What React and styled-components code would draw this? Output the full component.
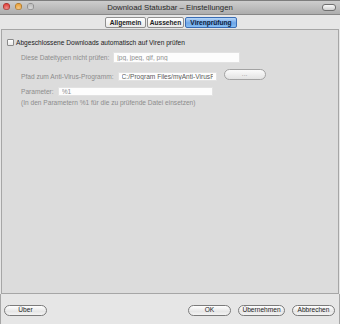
import styled, { createGlobalStyle } from 'styled-components';

const GlobalStyle = createGlobalStyle`
  html, body {
    margin: 0;
    padding: 0;
    background: #e6e6e6;
  }
  body {
    font-family: "Liberation Sans", Arial, sans-serif;
    font-size: 6.6px;
    color: #222;
  }
`;

const App = () => {
  return (
    <>
      <GlobalStyle />
      <Window>
        <TitleBar>
          <Lights>
            <Light color="#e0443e" />
            <Light color="#e9a23b" />
            <Light color="#bcbcbc" />
          </Lights>
          <Title>Download Statusbar – Einstellungen</Title>
          <ToolbarPill />
        </TitleBar>

        <TabRow>
          <Tab width={41}>Allgemein</Tab>
          <Tab width={37}>Aussehen</Tab>
          <Tab width={52} active>Virenprüfung</Tab>
        </TabRow>

        <Panel>
          <CheckRow>
            <Checkbox />
            <span>Abgeschlossene Downloads automatisch auf Viren prüfen</span>
          </CheckRow>

          <FieldRow top={6}>
            <Label>Diese Dateitypen nicht prüfen:</Label>
            <Field width={127} height={11} value="jpg, jpeg, gif, png" readOnly />
          </FieldRow>

          <FieldRow top={9}>
            <Label>Pfad zum Anti-Virus-Programm:</Label>
            <Field width={99} height={9} dark value="C:/Program Files/myAnti-VirusP" readOnly />
            <SmallButton>...</SmallButton>
          </FieldRow>

          <FieldRow top={6}>
            <Label>Parameter:</Label>
            <Field width={155} height={9} value="%1" readOnly />
          </FieldRow>

          <Note>(In den Parametern %1 für die zu prüfende Datei einsetzen)</Note>
        </Panel>

        <Footer>
          <PillButton width={43}>Über</PillButton>
          <Spacer />
          <PillButton width={43}>OK</PillButton>
          <PillButton width={47}>Übernehmen</PillButton>
          <PillButton width={43}>Abbrechen</PillButton>
        </Footer>
      </Window>
    </>
  );
};

export default App;

const Window = styled.div`
  width: 340px;
  height: 324px;
  display: flex;
  flex-direction: column;
  background: #e6e6e6;
  overflow: hidden;
`;

const TitleBar = styled.div`
  position: relative;
  height: 13px;
  display: flex;
  align-items: center;
  justify-content: center;
  background: linear-gradient(#cdcdcd, #adadad);
  border-top: 1px solid #7d7d7d;
  border-bottom: 1px solid #888;
  flex-shrink: 0;
`;

const Lights = styled.div`
  position: absolute;
  left: 3px;
  top: 2px;
  display: flex;
  gap: 5px;
`;

const Light = styled.div`
  width: 7px;
  height: 7px;
  border-radius: 50%;
  background: radial-gradient(circle at 50% 70%, #fff6 0, transparent 60%), ${({ color }) => color};
  box-shadow: inset 0 0 0 0.5px rgba(0, 0, 0, 0.45);
`;

const Title = styled.div`
  font-size: 7.8px;
  color: #2a2a2a;
  line-height: 1;
`;

const ToolbarPill = styled.div`
  position: absolute;
  right: 4px;
  top: 3px;
  width: 12px;
  height: 5px;
  border-radius: 3px;
  border: 1px solid #6f6f6f;
  background: linear-gradient(#fafafa, #cfcfcf);
`;

const TabRow = styled.div`
  height: 14px;
  padding-top: 2px;
  box-sizing: border-box;
  display: flex;
  justify-content: center;
  align-items: flex-start;
  gap: 1px;
  margin-left: 2px;
  flex-shrink: 0;
`;

const Tab = styled.div`
  width: ${({ width }) => width}px;
  height: 11px;
  box-sizing: border-box;
  display: flex;
  align-items: center;
  justify-content: center;
  font-weight: bold;
  font-size: 6.6px;
  color: ${({ active }) => (active ? '#0d1e3a' : '#222')};
  border: 1px solid ${({ active }) => (active ? '#3a6db5' : '#8f8f8f')};
  border-radius: 2px;
  background: ${({ active }) =>
    active ? 'linear-gradient(#b6d6f8, #6fa6e8 55%, #86bdf2)' : 'linear-gradient(#ffffff, #e9e9e9)'};
`;

const Panel = styled.div`
  flex: 1;
  margin: 0 1px;
  padding: 8px 5px 0;
  background: #dcdcdc;
  border: 1px solid #a6a6a6;
  display: flex;
  flex-direction: column;
`;

const CheckRow = styled.label`
  display: flex;
  align-items: center;
  gap: 2px;
  height: 8px;
  color: #222;
`;

const Checkbox = styled.span`
  width: 7px;
  height: 7px;
  box-sizing: border-box;
  border: 1px solid #8a8a8a;
  border-radius: 1px;
  background: linear-gradient(#ffffff, #e8e8e8);
`;

const FieldRow = styled.div`
  display: flex;
  align-items: center;
  gap: 4px;
  margin-top: ${({ top }) => top}px;
  padding-left: 14px;
`;

const Label = styled.span`
  color: #8c8c8c;
  white-space: nowrap;
`;

const Field = styled.input`
  width: ${({ width }) => width}px;
  height: ${({ height }) => height}px;
  box-sizing: border-box;
  margin: 0;
  padding: 0 3px;
  border: 1px solid #e2e2e2;
  background: #fdfdfd;
  font-family: "Liberation Sans", Arial, sans-serif;
  font-size: 6.6px;
  color: ${({ dark }) => (dark ? '#5a5a5a' : '#8e8e8e')};
  outline: none;
`;

const SmallButton = styled.div`
  width: 42px;
  height: 11px;
  box-sizing: border-box;
  margin-left: 3px;
  margin-top: -5px;
  border-radius: 6px;
  border: 1px solid #a3a3a3;
  background: linear-gradient(#fbfbfb, #e3e3e3);
  color: #999;
  display: flex;
  align-items: center;
  justify-content: center;
  line-height: 1;
`;

const Note = styled.div`
  margin-top: 3px;
  padding-left: 14px;
  color: #8c8c8c;
`;

const Footer = styled.div`
  height: 30px;
  flex-shrink: 0;
  display: flex;
  align-items: center;
  gap: 7px;
  padding: 2px 4px 0 3px;
  box-sizing: border-box;
  border-left: 1px solid #a6a6a6;
  border-right: 1px solid #a6a6a6;
`;

const Spacer = styled.div`
  flex: 1;
`;

const PillButton = styled.div`
  width: ${({ width }) => width}px;
  height: 11px;
  box-sizing: border-box;
  border-radius: 6px;
  border: 1px solid #7b7b7b;
  background: linear-gradient(#ffffff, #e6e6e6 60%, #f4f4f4);
  display: flex;
  align-items: center;
  justify-content: center;
  color: #1e1e1e;
  line-height: 1;
`;
